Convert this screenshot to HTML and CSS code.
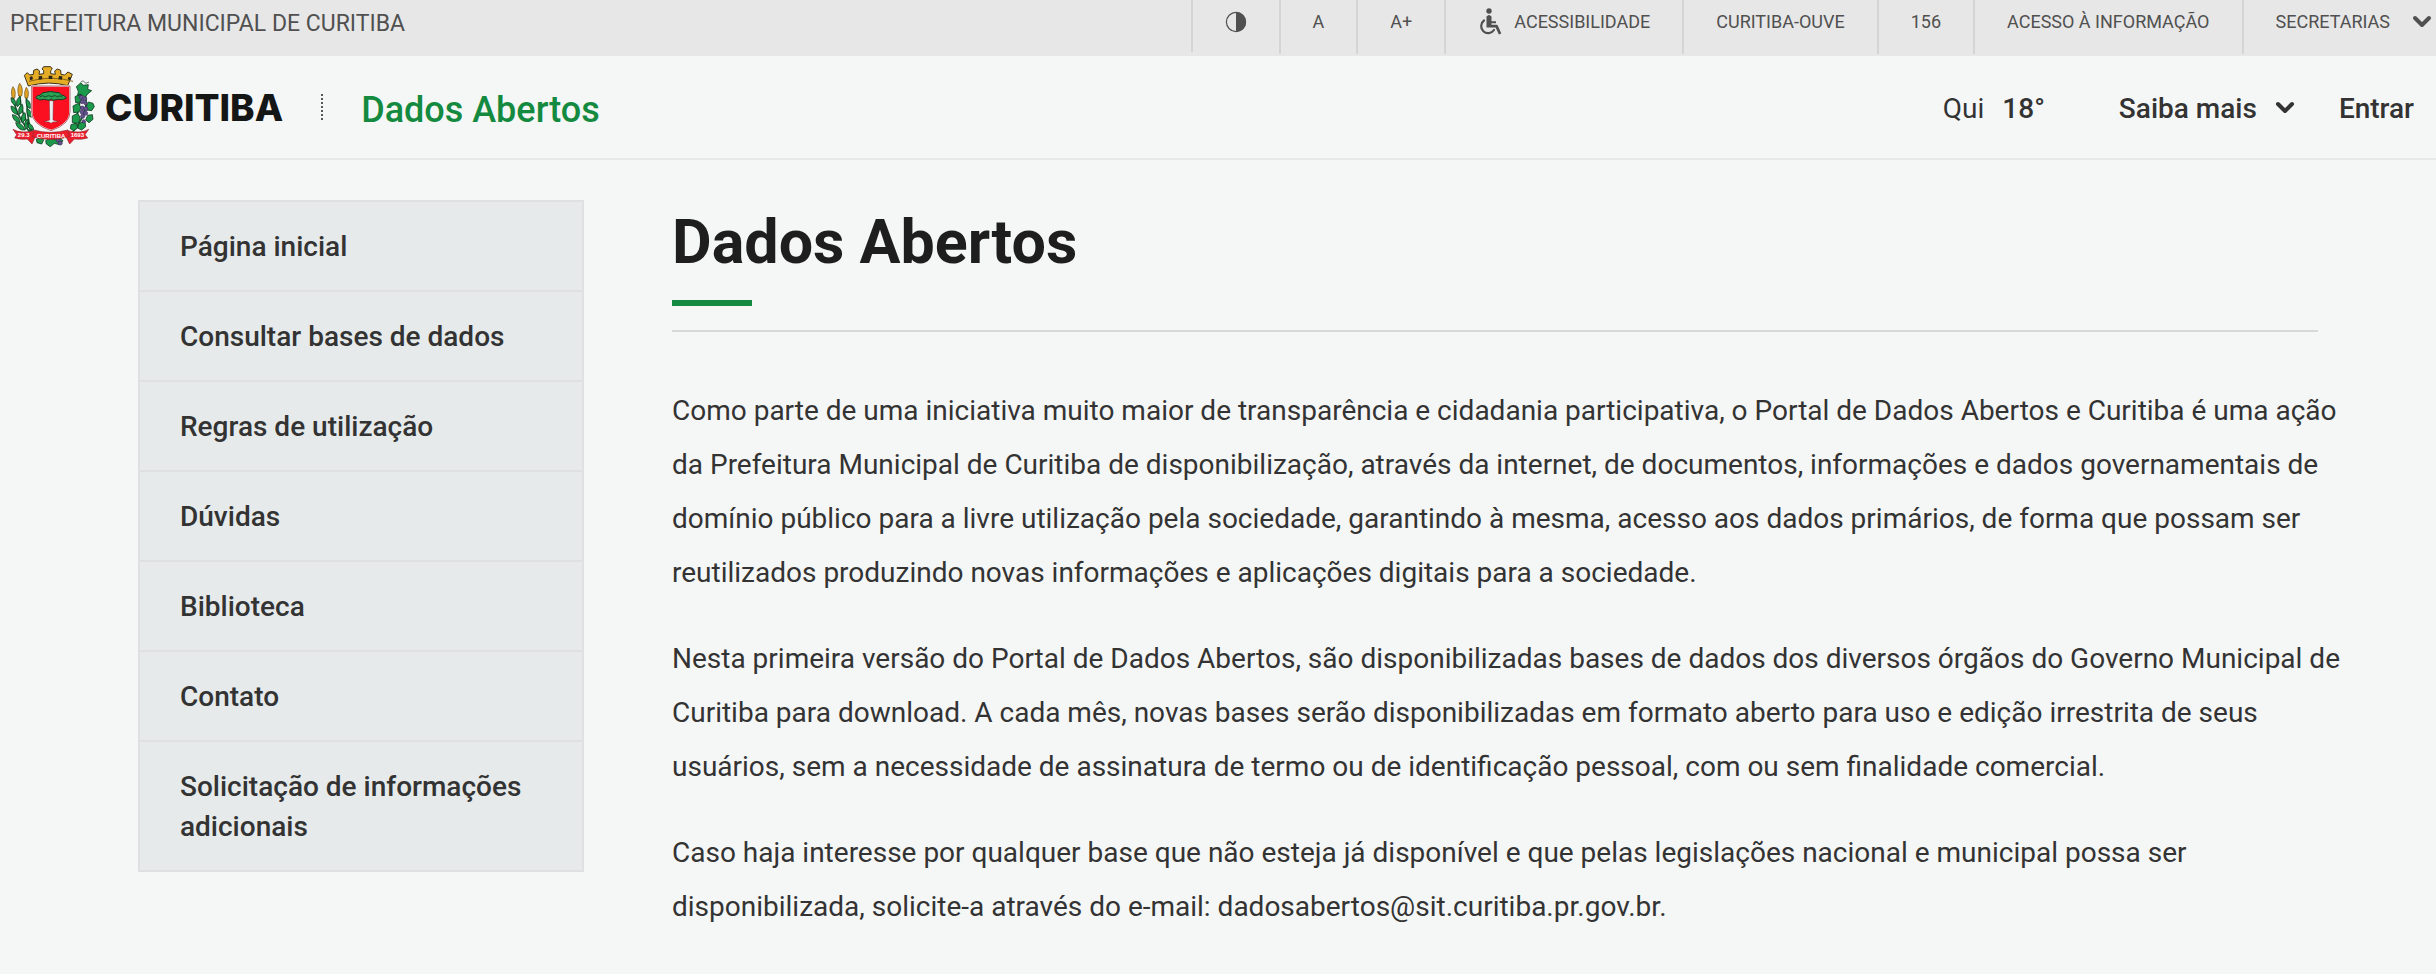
FILE: index.html
```html
<!DOCTYPE html>
<html lang="pt-BR">
<head>
<meta charset="utf-8">
<meta name="viewport" content="width=device-width, initial-scale=1">
<title>Dados Abertos - Curitiba</title>
<link rel="stylesheet" href="styles.css">
</head>
<body>
<div class="topbar">
  <a class="topbar-title" href="#">PREFEITURA MUNICIPAL DE CURITIBA</a>
  <ul class="topbar-list">
    <li class="topbar-item topbar-item-short"><button class="topbar-link" type="button" aria-label="Alto contraste">
      <svg class="icon-contrast" viewBox="0 0 22 22" aria-hidden="true"><circle cx="11" cy="11" r="9.6" fill="none" stroke="currentColor" stroke-width="1.2"/><path d="M11 1a10 10 0 0 1 0 20z" fill="currentColor"/></svg>
    </button></li>
    <li class="topbar-item"><button class="topbar-link" type="button">A</button></li>
    <li class="topbar-item"><button class="topbar-link" type="button">A+</button></li>
    <li class="topbar-item"><a class="topbar-link" href="#">
      <svg class="icon-access" viewBox="0 0 24 28" aria-hidden="true"><circle cx="11" cy="3" r="2.7" fill="currentColor"/><path d="M8.500 8.500q2.500-3 5 0v4.700h4.500v2h-4.500v1.600h5q1 0 1.400 1l3.400 7.700-2.400 1.100-3.300-7.100H8.500z" fill="currentColor"/><path d="M6 12.500a7 7 0 1 0 10 9.500" fill="none" stroke="currentColor" stroke-width="2.200" stroke-linecap="round"/></svg>
      ACESSIBILIDADE</a></li>
    <li class="topbar-item"><a class="topbar-link" href="#">CURITIBA-OUVE</a></li>
    <li class="topbar-item"><a class="topbar-link" href="#">156</a></li>
    <li class="topbar-item"><a class="topbar-link" href="#">ACESSO À INFORMAÇÃO</a></li>
    <li class="topbar-item topbar-item-last"><button class="topbar-link topbar-menu" type="button">SECRETARIAS
      <svg class="icon-chevron" viewBox="0 0 20 14" aria-hidden="true"><path d="M3 3l7 7 7-7"/></svg></button></li>
  </ul>
</div>
<header class="header">
  <a class="brand" href="#">
    <svg class="crest" viewBox="27 30 264 246" aria-hidden="true">
      <g fill="none" stroke="#16582d" stroke-width="5" stroke-linecap="round">
        <path d="M42 105q-2 60 52 125M62 110q0 60 40 120M82 125q2 50 12 100"/>
        <path d="M250 100q34 50-30 130M248 108q-10 60-24 110"/>
      </g>
      <g fill="#1c9a4b" stroke="#123d24" stroke-width="2.500">
        <path d="M36 125q14 3 16 24-16-4-16-24zM36 150q18 4 20 26-20-4-20-26zM40 176q20 2 24 24-22-2-24-24zM50 200q20 0 28 22-22 2-28-22zM62 122q-14 10-7 30 16-10 7-30zM70 145q-16 10-9 30 16-8 9-30zM78 170q-16 8-9 30 16-8 9-30zM86 190q-14 8-7 30 14-8 7-30zM82 130q16 8 12 28-16-6-12-28zM84 158q16 6 13 26-16-6-13-26zM84 200q18 4 20 22-20-2-20-22z"/>
        <path d="M232 92l14-12 6 8 16-2-2 14 12 4-12 10-8 10-10-8-12 2 2-12zM228 122l16-8 6 10-4 14-16 2zM268 138l14 4 4 10-8 12-14-2-2-12zM222 150l16-8 8 12-6 14-16 2zM266 178l14-2 2 14-12 10-10-8zM220 180l16-8 8 14-6 16-18-2zM240 202l18-6 2 16-12 10-12-6zM216 206l16-4 4 14-12 8-10-6zM140 254l14-8 12 4 12-6 14 10-10 12-16-4-12 10-12-8z"/>
        <path d="M112 250l14-6 8 8-6 12-14-4z"/>
      </g>
      <g fill="#66528f" stroke="#392c5c" stroke-width="2">
        <circle cx="246" cy="124" r="6"/><circle cx="257" cy="128" r="6"/><circle cx="250" cy="137" r="6"/><circle cx="260" cy="142" r="5"/>
        <circle cx="250" cy="156" r="6"/><circle cx="261" cy="158" r="6"/><circle cx="249" cy="168" r="6"/><circle cx="260" cy="172" r="6"/><circle cx="251" cy="181" r="6"/>
        <circle cx="254" cy="196" r="5"/><circle cx="177" cy="252" r="6"/><circle cx="184" cy="261" r="6"/>
      </g>
      <path d="M246 78q6-8 14 4l10-4" fill="none" stroke="#2c3b30" stroke-width="2"/>
      <g fill="#e1a526" stroke="#6d4b15" stroke-width="2">
        <path d="M42 92q10 12 5 34h-7q-6-22 2-34zM62 82q12 14 6 38h-9q-6-24 3-38zM82 94q10 12 4 32h-8q-4-20 4-32z"/>
      </g>
      <path d="M88 90L76 58l9-8 7 7 11-2 1-12 10-4 8 6-2 10 14-2v-9l-5-5 5-7h21l5 7-5 5v9l14 2-2-10 8-6 10 4 1 12 11 2 10-9 13 7-14 34q-56-16-118 1z" fill="#e5ad25" stroke="#3f321b" stroke-width="3" stroke-linejoin="round"/>
      <path d="M90 76q66-19 132 0" fill="none" stroke="#8a6419" stroke-width="3"/>
      <path d="M92 63l8-2 2 9-9 3zM119 61l10-1 1 10-11 1zM149 59h11v10h-11zM180 60l10 1-1 10-11-1zM209 62l8 3-4 8-7-3z" fill="#2b261b"/>
      <path d="M98 90h115v78q0 37-57 56-58-19-58-56z" fill="#fb1021" stroke="#fff" stroke-width="5"/>
      <path d="M98 90h115v78q0 37-57 56-58-19-58-56z" fill="none" stroke="#83232a" stroke-width="2"/>
      <path d="M151 134l1 58-17 5 14 1 7 4 7-4 15-1-16-5 1-58z" fill="#e9eef0" stroke="#7b2630" stroke-width="1.500"/>
      <path d="M110 125q4-7 14-8 5-9 16-8 15-5 30 0 13-1 18 8 10 1 14 9-10 8-24 4l-16 3-5-4-7 4-14-3q-14 6-26-5z" fill="#2ca254" stroke="#123d24" stroke-width="3"/>
      <path d="M122 123q9-8 17 0 9-8 19-1 10-7 17 0 8-6 15 2" fill="none" stroke="#164a2a" stroke-width="3"/>
      <g fill="#ed1c2b" stroke="#942b30" stroke-width="2">
        <path d="M42 220q22 14 62 4l4 20-9 20-14-15q-18 3-38-3l6-10z"/>
        <path d="M269 220q-22 14-64 4l-3 20 10 20 14-15q20 3 40-3l-8-10z"/>
        <path d="M104 222q50 14 103 0l4 20q-56 16-110 1z"/>
      </g>
      <g class="crest-text"><text x="74" y="244">29.3</text><text x="156" y="245">CURITIBA</text><text x="235" y="244">1693</text></g>
    </svg>
    <span class="brand-name">CURITIBA</span>
  </a>
  <span class="divider"></span>
  <a class="site-name" href="#">Dados Abertos</a>
  <div class="header-nav">
    <span class="weather">Qui <strong class="temp">18°</strong></span>
    <button class="nav-button nav-more" type="button">Saiba mais
      <svg class="icon-chevron" viewBox="0 0 20 14" aria-hidden="true"><path d="M3 3l7 7 7-7"/></svg></button>
    <a class="nav-button" href="#">Entrar</a>
  </div>
</header>
<div class="page">
  <nav class="sidebar" aria-label="Menu">
    <a class="side-link" href="#">Página inicial</a>
    <a class="side-link" href="#">Consultar bases de dados</a>
    <a class="side-link" href="#">Regras de utilização</a>
    <a class="side-link" href="#">Dúvidas</a>
    <a class="side-link" href="#">Biblioteca</a>
    <a class="side-link" href="#">Contato</a>
    <a class="side-link" href="#">Solicitação de informações adicionais</a>
  </nav>
  <main class="content">
    <h1 class="title">Dados Abertos</h1>
    <div class="article">
      <p class="text">Como parte de uma iniciativa muito maior de transparência e cidadania participativa, o Portal de Dados Abertos e Curitiba é uma ação da Prefeitura Municipal de Curitiba de disponibilização, através da internet, de documentos, informações e dados governamentais de domínio público para a livre utilização pela sociedade, garantindo à mesma, acesso aos dados primários, de forma que possam ser reutilizados produzindo novas informações e aplicações digitais para a sociedade.</p>
      <p class="text">Nesta primeira versão do Portal de Dados Abertos, são disponibilizadas bases de dados dos diversos órgãos do Governo Municipal de Curitiba para download. A cada mês, novas bases serão disponibilizadas em formato aberto para uso e edição irrestrita de seus usuários, sem a necessidade de assinatura de termo ou de identificação pessoal, com ou sem finalidade comercial.</p>
      <p class="text">Caso haja interesse por qualquer base que não esteja já disponível e que pelas legislações nacional e municipal possa ser disponibilizada, solicite-a através do e-mail: dadosabertos@sit.curitiba.pr.gov.br.</p>
    </div>
  </main>
</div>
</body>
</html>
```
FILE: styles.css
```css
* { box-sizing: border-box; }
body {
  margin: 0;
  background: #f5f7f6;
  color: #333;
  font-family: Roboto, "Liberation Sans", sans-serif;
  font-size: 28px;
}
a { color: inherit; text-decoration: none; }
button {
  border: 0;
  padding: 0;
  background: none;
  color: inherit;
  font: inherit;
  cursor: pointer;
}

.topbar {
  display: flex;
  justify-content: space-between;
  height: 56px;
  padding-left: 10px;
  background: #e7e7e7;
  color: #505050;
}
.topbar-title { font-size: 23px; line-height: 48px; }
.topbar-list { display: flex; margin: 0; padding: 0; list-style: none; }
.topbar-item {
  height: 54px;
  padding: 0 32px;
  border-left: 2px solid #d5d5d5;
  font-size: 18px;
  line-height: 44px;
}
.topbar-item-short { height: 52px; }
.topbar-item-last { padding-right: 4px; }
.topbar-link { display: flex; align-items: center; height: 44px; }
.topbar-menu { gap: 22px; }
.icon-contrast { width: 22px; height: 22px; }
.icon-access { width: 24px; height: 28px; margin-right: 12px; }
.icon-chevron {
  width: 20px;
  height: 14px;
  fill: none;
  stroke: currentColor;
  stroke-width: 4;
  stroke-linecap: round;
  stroke-linejoin: round;
}

.header {
  display: flex;
  align-items: center;
  height: 104px;
  padding: 0 22px 0 8px;
  border-bottom: 2px solid #e7e9e8;
}
.brand { display: flex; align-items: center; gap: 9px; }
.crest { width: 88px; height: 82px; }
.crest-text {
  fill: #fff;
  font-family: "Liberation Sans", sans-serif;
  font-size: 18px;
  font-weight: 700;
  text-anchor: middle;
}
.brand-name {
  color: #151616;
  font-family: Inter, sans-serif;
  font-size: 37px;
  font-weight: 800;
}
.divider { height: 26px; margin: 0 38px; border-left: 2px dotted #555; }
.site-name { padding-top: 6px; color: #148a40; font-size: 36px; font-weight: 500; }
.header-nav { display: flex; align-items: center; margin-left: auto; padding-top: 2px; }
.weather { display: flex; gap: 18px; margin-right: 74px; }
.temp { font-weight: 500; }
.nav-button { font-weight: 500; }
.nav-more { display: flex; align-items: center; gap: 18px; margin-right: 44px; }

.page {
  display: flex;
  align-items: flex-start;
  gap: 88px;
  padding: 40px 118px 32px 138px;
}
.sidebar {
  flex: 0 0 446px;
  border: 2px solid #dfe0e1;
  background: #e6eaeb;
}
.side-link {
  display: block;
  padding: 25px 38px 23px 40px;
  font-weight: 500;
  line-height: 40px;
}
.side-link + .side-link { border-top: 2px solid #dfe0e1; }
.content { flex: 1; min-width: 0; }
.title {
  margin: 0 0 52px;
  padding-bottom: 24px;
  border-bottom: 2px solid #d7d9d8;
  color: #1e1e1e;
  font-size: 61px;
  font-weight: 700;
  line-height: 84px;
}
.title::after {
  content: "";
  display: block;
  width: 80px;
  height: 6px;
  margin-top: 16px;
  background: #148a40;
}
.article { margin-right: -32px; }
.text { margin: 0 0 32px; line-height: 54px; }
```
